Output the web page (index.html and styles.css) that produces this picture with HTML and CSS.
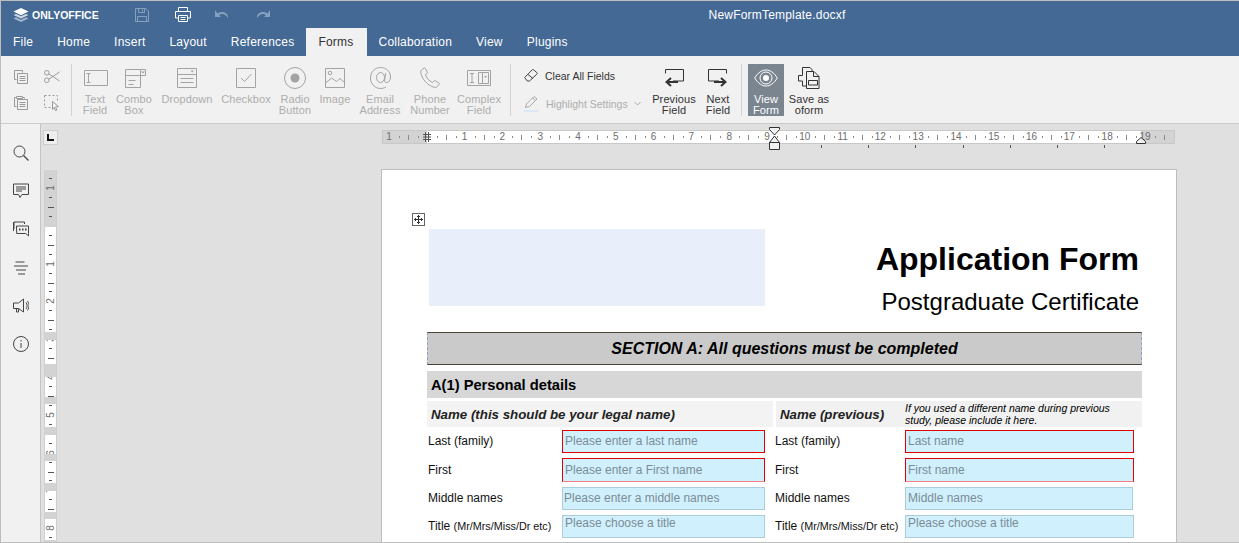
FILE: index.html
```html
<!DOCTYPE html>
<html lang="en">

<head>
    <meta charset="UTF-8">
    <title>NewFormTemplate.docxf</title>
    <link rel="stylesheet" href="styles.css">
</head>

<body>
    <div class="window">
        <!-- title bar -->
        <header class="titlebar">
            <div class="title-left">
                <svg class="logo-mark" width="16" height="16" viewBox="0 0 16 16">
                    <path d="M8 1L15.500 4.600 8 8.200 .5 4.600z" fill="#fff" />
                    <path d="M3 6.900L.5 8 8 11.600 15.500 8 13 6.900 8 9.300z" fill="#fff" opacity=".75" />
                    <path d="M3 10.300L.5 11.400 8 15 15.500 11.400 13 10.300 8 12.700z" fill="#fff" opacity=".5" />
                </svg>
                <span class="logo-text">ONLYOFFICE</span>
                <svg class="q-save" width="14" height="14" viewBox="0 0 14 14" fill="none" stroke="#86a0bf">
                    <path d="M.5.500h10.500l2.500 2.500v10.500h-13z" />
                    <path d="M3.500.5v4h6v-4M7.500 1.500v2M2.500 13.500v-5h9v5" />
                </svg>
                <svg class="q-print" width="16" height="15" viewBox="0 0 16 15" fill="none" stroke="#fff">
                    <path d="M3.500 4V.5h9V4M3.500 11H.5V4.500h15V11h-3" />
                    <path d="M3.500 8.500h9v6h-9zM5.500 10.500h5M5.500 12.500h5" />
                </svg>
                <svg class="q-undo" width="15" height="9" viewBox="0 0 15 9" fill="#86a0bf">
                    <path d="M0 0v7h6L4 5c3-2 6-1.500 9 3 .5-5-5-8-10.500-4.500z" />
                </svg>
                <svg class="q-redo" width="15" height="9" viewBox="0 0 15 9" fill="#86a0bf">
                    <path d="M15 0v7H9l2-2C8 3 5 3.500 2 8 1.500 3 7 0 12.500 3.500z" />
                </svg>
            </div>
            <div class="file-name">NewFormTemplate.docxf</div>
        </header>

        <!-- tabs -->
        <nav class="tabs">
            <a class="tab">File</a>
            <a class="tab">Home</a>
            <a class="tab">Insert</a>
            <a class="tab">Layout</a>
            <a class="tab">References</a>
            <a class="tab active">Forms</a>
            <a class="tab">Collaboration</a>
            <a class="tab">View</a>
            <a class="tab">Plugins</a>
        </nav>

        <!-- toolbar -->
        <section class="toolbar">
            <div class="clipboard">
                <svg width="14" height="14" viewBox="0 0 14 14" fill="none" stroke="#9a9a9a">
                    <path d="M.5.500h8v2M.5.500v9h2" />
                    <path d="M3.500 3.500h10v10h-10zM5.500 6.500h6M5.500 8.500h6M5.500 10.500h6" />
                </svg>
                <svg width="16" height="13" viewBox="0 0 16 13" fill="none" stroke="#9a9a9a">
                    <circle cx="2.800" cy="2.800" r="2.300" />
                    <circle cx="2.800" cy="10.200" r="2.300" />
                    <path d="M4.800 3.800L15.500 11M4.800 9.200L15.500 2" />
                </svg>
                <svg width="14" height="15" viewBox="0 0 14 15" fill="none" stroke="#9a9a9a">
                    <path d="M2.500 2.500h-2v9h2M8.500 2.500h2v1M2.500 1.500h6v2h-6z" />
                    <path d="M3.500 4.500h10v10h-10zM5.500 7.500h6M5.500 9.500h6M5.500 11.500h6" />
                </svg>
                <svg width="15" height="16" viewBox="0 0 15 16" fill="none" stroke="#9a9a9a">
                    <path d="M.5.500h13v7M.5.500v12h7" stroke-dasharray="2 2" />
                    <path d="M8.500 6.500l6 5-3 .5 1.500 3-1.500.5-1.500-3-1.500 2z" />
                </svg>
            </div>
            <div class="sep"></div>

            <div class="form-tools">
                <div class="tool">
                    <svg class="tool-icon" width="26" height="20" viewBox="0 0 26 20" fill="none" stroke="#a3a3a3">
                        <path d="M2.500 2.500h23v15h-23zM4.500 5.500h4M4.500 14.500h4M6.500 5.500v9" />
                    </svg>
                    <span>Text<br>Field</span>
                </div>
                <div class="tool">
                    <svg class="tool-icon" width="26" height="20" viewBox="0 0 26 20" fill="none" stroke="#a3a3a3">
                        <path d="M4.500 1.500v18h15v-18zM4.500 7.500h20M19.500 1.500h5v6M7.500 12.500h7M7.500 16.500h5" />
                        <path d="M20 3.500h4l-2 2z" fill="#a3a3a3" stroke="none" />
                    </svg>
                    <span>Combo<br>Box</span>
                </div>
                <div class="tool">
                    <svg class="tool-icon" width="22" height="20" viewBox="0 0 22 20" fill="none" stroke="#a3a3a3">
                        <path d="M1.500.5h19v19h-19zM1.500 6.500h19M4.500 10.500h13M4.500 14.500h13" />
                        <path d="M14.500 2.500h3.500l-1.750 2z" fill="#a3a3a3" stroke="none" />
                    </svg>
                    <span>Dropdown</span>
                </div>
                <div class="tool">
                    <svg class="tool-icon" width="20" height="20" viewBox="0 0 20 20" fill="none" stroke="#a3a3a3">
                        <path d="M.5.500h19v19h-19zM5 10l3.500 3.500L15.500 6" />
                    </svg>
                    <span>Checkbox</span>
                </div>
                <div class="tool">
                    <svg class="tool-icon" width="22" height="22" viewBox="0 0 22 22" fill="none" stroke="#a3a3a3">
                        <circle cx="11" cy="11" r="10.500" />
                        <circle cx="11" cy="11" r="4.500" fill="#a3a3a3" stroke="none" />
                    </svg>
                    <span>Radio<br>Button</span>
                </div>
                <div class="tool">
                    <svg class="tool-icon" width="20" height="20" viewBox="0 0 20 20" fill="none" stroke="#a3a3a3">
                        <path d="M.5.500h19v19h-19zM.5 15l6-5 5 3.500 3.500-3 4.500 4" />
                        <circle cx="5" cy="5" r="1.800" />
                    </svg>
                    <span>Image</span>
                </div>
                <div class="tool">
                    <svg class="tool-icon" width="21" height="22" viewBox="0 0 21 22" fill="none" stroke="#a3a3a3">
                        <path d="M16 20c-2 1-3.500 1.500-5.500 1.500C5 21.500.5 17 .5 11S5 .5 10.500.5s10 4 10 9.500c0 3.500-2 5.500-4 5.500-1.500 0-2-1-1.800-2.500l1-7" />
                        <ellipse cx="10.500" cy="10.500" rx="4" ry="5" />
                    </svg>
                    <span>Email<br>Address</span>
                </div>
                <div class="tool">
                    <svg class="tool-icon" width="20" height="21" viewBox="0 0 20 21" fill="none" stroke="#a3a3a3">
                        <path d="M1.500 2.500L4 .5c.6-.3 1 0 1.300.5l2 3.500c.3.600.1 1-.3 1.400L5.500 7c.5 3 3.500 6.500 7 8l1.500-1.600c.4-.4.900-.4 1.400-.1l3.500 2.200c.5.300.6.800.2 1.300l-2.100 2.500c-.6.700-1.500.8-2.500.5C7 18 1.500 11 .7 4.500c-.1-.8.200-1.500.8-2z" />
                    </svg>
                    <span>Phone<br>Number</span>
                </div>
                <div class="tool">
                    <svg class="tool-icon" width="24" height="20" viewBox="0 0 24 20" fill="none" stroke="#a3a3a3">
                        <path d="M.5 2.500h23v15H.5zM3 5.500h4M3 14.500h4M5 5.500v9M11.500 4.500h10v11h-10zM15.500 4.500v11" />
                        <path d="M17 8h3l-1.500 2z" fill="#a3a3a3" stroke="none" />
                    </svg>
                    <span>Complex<br>Field</span>
                </div>
            </div>
            <div class="sep sep-b"></div>

            <div class="field-actions">
                <div class="action">
                    <svg width="14" height="13" viewBox="0 0 14 13" fill="none" stroke="#444">
                        <path d="M.7 8.500L8 1c.6-.6 1.200-.6 1.800 0l3 2.500c.6.500.6 1.100 0 1.700L5.500 12H3.300z" />
                        <path d="M4 5.500l5 4" />
                    </svg>
                    <span>Clear All Fields</span>
                </div>
                <div class="action disabled">
                    <svg width="15" height="16" viewBox="0 0 15 16" fill="none" stroke="#a8a8a8">
                        <path d="M1.500 11.500l1-3.500L10 .5l3 2.500-7.500 7.500zM8.500 2l3 2.500" />
                        <path d="M0 15h14" stroke="#dbe8f3" stroke-width="2" />
                    </svg>
                    <span>Highlight Settings</span>
                    <svg class="caret" width="7" height="5" viewBox="0 0 7 5" fill="none" stroke="#a8a8a8">
                        <path d="M.5 1l3 3 3-3" />
                    </svg>
                </div>
            </div>

            <div class="nav-tools">
                <div class="tool dark">
                    <svg class="tool-icon" width="20" height="18" viewBox="0 0 20 18" fill="none" stroke="#333">
                        <path d="M1.500 4.500V.5h18v11.500H9" />
                        <path d="M14 13H4" stroke-width="2" />
                        <path d="M7 9l-4.500 4L7 17" stroke-width="2" />
                    </svg>
                    <span>Previous<br>Field</span>
                </div>
                <div class="tool dark">
                    <svg class="tool-icon" width="20" height="18" viewBox="0 0 20 18" fill="none" stroke="#333">
                        <path d="M18.500 4.500V.5H.5v11.500H11" />
                        <path d="M6 13h10" stroke-width="2" />
                        <path d="M13 9l4.500 4L13 17" stroke-width="2" />
                    </svg>
                    <span>Next<br>Field</span>
                </div>
            </div>
            <div class="sep sep-c"></div>

            <div class="tool view-form">
                <svg class="tool-icon" width="24" height="18" viewBox="0 0 24 18" fill="none" stroke="#fff">
                    <path d="M.7 9C4 3.500 8 1 12 1s8 2.500 11.300 8C20 14.500 16 17 12 17S4 14.500.7 9z" />
                    <circle cx="12" cy="9" r="6" />
                    <circle cx="12" cy="9" r="3" fill="#fff" stroke="none" />
                </svg>
                <span>View<br>Form</span>
            </div>
            <div class="tool dark save-oform">
                <svg class="tool-icon" width="22" height="22" viewBox="0 0 22 22" fill="none" stroke="#333">
                    <path d="M4.500 8.500V.5H12l2 2v2M4.500 8.500h-4v5.500h4v5h4" />
                    <path d="M8.500 4.500v17h12.500V9.500l-5-5zM15.500 4.500v5h5.500M10.500 13.500h9v4.500h-9z" />
                </svg>
                <span>Save as<br>oform</span>
            </div>
        </section>

        <div class="main">
            <!-- left panel -->
            <aside class="sidebar">
                <svg width="16" height="16" viewBox="0 0 16 16" fill="none" stroke="#444">
                    <circle cx="6.500" cy="6.500" r="5.500" />
                    <path d="M10.500 10.500L15.500 15.500" stroke-width="1.300" />
                </svg>
                <svg width="16" height="15" viewBox="0 0 16 15" fill="none" stroke="#444">
                    <path d="M.5.500h15v10.500H9l-2 3-1.500-3h-5zM3 3.500h10M3 5.500h10M3 7.500h6" />
                </svg>
                <svg width="16" height="15" viewBox="0 0 16 15" fill="none" stroke="#444">
                    <path d="M1 7.500V.5h10.500v2M.5.500v9" />
                    <path d="M3.500 4.500h12v7.500l.2 2.500-3-2.500h-9z" />
                    <path d="M6 8h1.500M9 8h1.500M12 8h1.500" stroke-width="2" />
                </svg>
                <svg width="14" height="13" viewBox="0 0 14 13" fill="none" stroke="#444">
                    <path d="M1.500.5h9M0 4.500h14M2 8.500h10M4 12.500h7" />
                </svg>
                <svg width="16" height="15" viewBox="0 0 16 15" fill="none" stroke="#444">
                    <path d="M.5 4.500h5L10.500.5v13l-5-3.500h-5zM3.500 10v3.500h2V10M13 4c1.500 2 1.500 4.500 0 6.500M14.500 2.500c2 3 2 6.500 0 9.500" />
                </svg>
                <svg width="16" height="16" viewBox="0 0 16 16" fill="none" stroke="#444">
                    <circle cx="8" cy="8" r="7.500" />
                    <path d="M8 7v5" />
                    <path d="M8 4v1.500" />
                </svg>
            </aside>

            <div class="canvas">
                <div class="corner"><span class="corner-mark"></span></div>

                <!-- top ruler -->
                <div class="ruler-h">
                    <span>1</span><span></span>
                    <span>1</span><span>2</span><span>3</span><span>4</span><span>5</span><span>6</span>
                    <span>7</span><span>8</span><span>9</span><span>10</span><span>11</span><span>12</span>
                    <span>13</span><span>14</span><span>15</span><span>16</span><span>17</span><span>18</span><span>19</span>
                    <svg class="margin-left" width="8" height="10" viewBox="0 0 8 10" stroke="#555">
                        <path d="M0 2.500h8M0 5h8M0 7.500h8M2.500 0v10M5.500 0v10" />
                    </svg>
                    <svg class="indent-mark" width="11" height="23" viewBox="0 0 11 23" fill="#f1f1f1" stroke="#333">
                        <path d="M.5.500h10v2L5.500 8 .5 2.500zM.5 15.500L5.500 9l5 6.500zM.5 15.500h10v7H.5z" />
                    </svg>
                    <svg class="indent-right" width="10" height="7" viewBox="0 0 10 7" fill="#f1f1f1" stroke="#333">
                        <path d="M.5 6.500v-2L5 .5l4.500 4v2z" />
                    </svg>
                    <div class="tab-stops"></div>
                </div>

                <!-- left ruler -->
                <div class="ruler-v">
                    <span>1</span><span></span>
                    <span>1</span><span>2</span><span>3</span><span>4</span><span>5</span><span>6</span><span>7</span><span>8</span>
                    <div class="row-bands"></div>
                </div>

                <!-- the document -->
                <article class="page">
                    <div class="move-handle">
                        <svg width="9" height="9" viewBox="0 0 9 9" fill="none" stroke="#333">
                            <path d="M4.500 0v9M0 4.500h9M3 1.500h3M3 7.500h3M1.500 3v3M7.500 3v3" />
                        </svg>
                    </div>

                    <div class="doc-head">
                        <div class="logo-slot"></div>
                        <div class="doc-title">
                            <h1>Application Form</h1>
                            <p>Postgraduate Certificate</p>
                        </div>
                    </div>

                    <h2 class="section-a">SECTION A: All questions must be completed</h2>
                    <h3 class="part-title">A(1) Personal details</h3>

                    <div class="name-row">
                        <div class="name-cell name-legal"><b>Name (this should be your legal name)</b></div>
                        <div class="name-cell name-prev">
                            <b>Name (previous)</b>
                            <small>If you used a different name during previous study, please include it here.</small>
                        </div>
                    </div>

                    <div class="fields">
                        <label>Last (family)</label>
                        <div class="field required">Please enter a last name</div>
                        <label class="right-label">Last (family)</label>
                        <div class="field required">Last name</div>

                        <label class="tall">First</label>
                        <div class="field required fade-bottom">Please enter a First name</div>
                        <label class="right-label tall">First</label>
                        <div class="field required fade-bottom">First name</div>

                        <label>Middle names</label>
                        <div class="field tight">Please enter a middle names</div>
                        <label class="right-label">Middle names</label>
                        <div class="field short">Middle names</div>

                        <label>Title <small>(Mr/Mrs/Miss/Dr etc)</small></label>
                        <div class="field choice">Please choose a title</div>
                        <label class="right-label">Title <small>(Mr/Mrs/Miss/Dr etc)</small></label>
                        <div class="field choice">Please choose a title</div>
                    </div>
                </article>
            </div>
        </div>
    </div>
</body>

</html>
```

FILE: styles.css
```css
body {
    margin: 0;
    font-family: "Liberation Sans", Arial, sans-serif;
    font-size: 12px;
    color: #111;
    background: #e0e0e0;
}

.window {
    box-sizing: border-box;
    width: 1239px;
    height: 543px;
    border: 1px solid #bdbdbd;
    border-right: none;
    display: flex;
    flex-direction: column;
    overflow: hidden;
}

/* title bar */
.titlebar {
    flex: none;
    height: 27px;
    background: #446995;
    color: #fff;
    display: flex;
    align-items: center;
}

.title-left {
    flex: none;
    width: 314px;
    display: flex;
    align-items: center;
    padding-left: 12px;
    box-sizing: border-box;
}

.logo-text {
    margin-left: 3px;
    font-size: 10.5px;
    font-weight: bold;
}

.q-save {
    margin-left: 36px;
}

.q-print {
    margin-left: 26px;
}

.q-undo {
    margin-left: 24px;
}

.q-redo {
    margin-left: 25px;
}

.file-name {
    flex: 1;
    text-align: center;
    letter-spacing: .2px;
}

/* tabs */
.tabs {
    flex: none;
    height: 28px;
    background: #446995;
    display: flex;
    align-items: stretch;
}

.tab {
    padding: 6px 12px 0;
    color: #fff;
    letter-spacing: .22px;
    line-height: 16px;
}

.tab.active {
    background: #f1f1f1;
    color: #333;
    padding-right: 13px;
}

/* toolbar */
.toolbar {
    flex: none;
    box-sizing: border-box;
    height: 68px;
    background: #f1f1f1;
    border-bottom: 1px solid #cbcbcb;
    display: flex;
    align-items: flex-start;
    padding-top: 8px;
    padding-left: 13px;
}

.clipboard {
    width: 57px;
    height: 52px;
    display: grid;
    grid-template-columns: 30px 27px;
    align-items: center;
    justify-items: start;
}

.sep {
    flex: none;
    width: 1px;
    height: 52px;
    background: #d2d2d2;
}

.form-tools {
    margin-left: 4px;
    display: grid;
    grid-template-columns: 38px 40px 66px 52px 46px 34px 56px 44px 54px;
}

.tool {
    display: flex;
    flex-direction: column;
    align-items: center;
    height: 52px;
    font-size: 11px;
    line-height: 11px;
    color: #adadad;
    letter-spacing: .1px;
    text-align: center;
}

.tool-icon {
    flex: none;
    height: 22px;
    margin-top: 3px;
    margin-bottom: 5px;
}

.sep-b {
    margin-left: 4px;
}

.field-actions {
    box-sizing: border-box;
    width: 142px;
    height: 52px;
    padding: 4px 0 5px 13px;
    display: flex;
    flex-direction: column;
    justify-content: space-between;
}

.action {
    display: flex;
    align-items: center;
    font-size: 10.5px;
    color: #333;
    height: 15px;
}

.action svg:first-child {
    flex: none;
    margin-right: 7px;
}

.action.disabled {
    color: #adadad;
}

.action .caret {
    margin-left: 6px;
}

.nav-tools {
    display: grid;
    grid-template-columns: 44px 44px;
    margin-left: -1px;
}

.tool.dark {
    color: #333;
}

.sep-c {
    margin-left: 1px;
}

.tool.view-form {
    width: 36px;
    margin-left: 6px;
    background: #7b858f;
    color: #fff;
}

.tool.save-oform {
    width: 50px;
}

/* left panel */
.main {
    flex: 1;
    min-height: 0;
    display: flex;
}

.sidebar {
    flex: none;
    box-sizing: border-box;
    width: 40px;
    background: #f1f1f1;
    border-right: 1px solid #c4c4c4;
    display: flex;
    flex-direction: column;
    align-items: center;
    gap: 22.200px;
    padding-top: 21px;
}

.sidebar svg {
    flex: none;
    height: 16px;
}

.canvas {
    flex: 1;
    min-width: 0;
    background: #e0e0e0;
    display: grid;
    grid-template-columns: 15px 1fr;
    grid-template-rows: 15px 1fr;
    padding: 6px 0 0 2px;
    overflow: hidden;
}

.corner {
    box-sizing: border-box;
    width: 15px;
    height: 15px;
    background: #eee;
    border: 1px solid #cdcdcd;
    display: flex;
    align-items: center;
    justify-content: center;
}

.corner-mark {
    box-sizing: border-box;
    width: 7px;
    height: 7px;
    border-left: 2px solid #111;
    border-bottom: 2px solid #111;
}

/* rulers */
.ruler-h {
    box-sizing: border-box;
    position: relative;
    width: 793px;
    height: 14px;
    margin-left: 324px;
    border: 1px solid #c8c8c8;
    display: flex;
    font-size: 10px;
    line-height: 12px;
    color: #6d6d6d;
    background:
        repeating-linear-gradient(90deg, #8a8a8a 0 1px, transparent 1px 37.8px) 25px center / 100% 5px no-repeat,
        repeating-linear-gradient(90deg, #8a8a8a 0 1px, transparent 1px 18.9px) 15.600px center / 100% 2px no-repeat,
        linear-gradient(90deg, #d3d3d3 44px, #fff 44px 758px, #d3d3d3 758px);
}

.ruler-h span {
    flex: none;
    width: 37.8px;
    text-align: center;
}

.ruler-h span:first-child {
    margin-left: -12.900px;
}

.margin-left {
    position: absolute;
    left: 40px;
    top: 1px;
}

.indent-mark {
    position: absolute;
    left: 386px;
    top: -4px;
}

.indent-right {
    position: absolute;
    left: 753px;
    top: 6px;
}

.tab-stops {
    position: absolute;
    left: 438px;
    top: 14px;
    width: 290px;
    height: 3px;
    background: repeating-linear-gradient(90deg, #555 0 1px, transparent 1px 47.2px);
}

.ruler-v {
    box-sizing: border-box;
    position: relative;
    grid-column: 1;
    grid-row: 2;
    width: 13px;
    height: 400px;
    margin: 25px 0 0 1px;
    border: 1px solid #cfcfcf;
    border-top: none;
    display: flex;
    flex-direction: column;
    font-size: 10px;
    line-height: 12px;
    color: #6d6d6d;
    background:
        repeating-linear-gradient(180deg, #555 0 1px, transparent 1px 37.8px) center 37px / 6px 100% no-repeat,
        repeating-linear-gradient(180deg, #555 0 1px, transparent 1px 18.9px) center 8px / 3px 100% no-repeat,
        linear-gradient(#d3d3d3 57px, #fff 57px);
}

.ruler-v span {
    flex: none;
    height: 37.8px;
    display: flex;
    align-items: center;
    justify-content: center;
    writing-mode: vertical-rl;
    transform: rotate(180deg);
}

.ruler-v span:first-child {
    margin-top: -1px;
}

.row-bands {
    position: absolute;
    inset: 0;
    background: linear-gradient(transparent 162px, #d3d3d3 162px 170px, transparent 170px 194px, #d3d3d3 194px 207px,
        transparent 207px 227px, #d3d3d3 227px 234px, transparent 234px 257px, #d3d3d3 257px 265px,
        transparent 265px 284px, #d3d3d3 284px 291px, transparent 291px 313px, #d3d3d3 313px 321px,
        transparent 321px 342px, #d3d3d3 342px 349px, transparent 349px 370px, #d3d3d3 370px);
}

/* the document */
.page {
    box-sizing: border-box;
    position: relative;
    grid-column: 2;
    grid-row: 2;
    width: 796px;
    height: 420px;
    margin: 24px 0 0 323px;
    padding: 59px 0 0 45px;
    background: #fff;
    border: 1px solid #bdbdbd;
}

.move-handle {
    box-sizing: border-box;
    position: absolute;
    left: 30px;
    top: 43px;
    width: 13px;
    height: 13px;
    border: 1px solid #666;
    display: flex;
    align-items: center;
    justify-content: center;
}

.doc-head {
    width: 710px;
    height: 77px;
    margin-left: 2px;
    display: flex;
    justify-content: space-between;
}

.logo-slot {
    width: 336px;
    height: 77px;
    background: #e8effb;
}

.doc-title {
    text-align: right;
    color: #000;
}

.doc-title h1 {
    margin: 12px 0 0;
    font-size: 32px;
    line-height: 36px;
    font-weight: bold;
}

.doc-title p {
    margin: 13px 0 0;
    font-size: 24px;
    line-height: 24px;
}

.section-a {
    box-sizing: border-box;
    width: 715px;
    height: 33px;
    margin: 26px 0 0;
    background: #cacaca;
    border-top: 1px solid #4a4432;
    border-bottom: 1px solid #4a4432;
    border-left: 1px dashed #8aa3c7;
    border-right: 1px dashed #8aa3c7;
    text-align: center;
    font-size: 16px;
    line-height: 31px;
    font-style: italic;
    font-weight: bold;
    color: #000;
}

.part-title {
    box-sizing: border-box;
    width: 715px;
    height: 27px;
    margin: 6px 0 0;
    padding-left: 4px;
    background: #d7d7d7;
    font-size: 14.700px;
    line-height: 28px;
    color: #000;
}

.name-row {
    display: flex;
    gap: 3px;
    width: 715px;
    height: 26px;
    margin-top: 3px;
}

.name-cell {
    box-sizing: border-box;
    padding-left: 4px;
    display: flex;
    align-items: center;
    font-size: 13.300px;
    font-style: italic;
    color: #222;
}

.name-legal {
    width: 346px;
    background: #f3f3f3;
}

.name-prev {
    width: 366px;
    background: #f1f1f1;
}

.name-prev b {
    flex: none;
    width: 125px;
}

.name-prev small {
    font-size: 10.500px;
    line-height: 12px;
    color: #000;
    width: 230px;
}

.fields {
    display: grid;
    grid-template-columns: 135px 203px 10px 130px 229px;
    grid-template-rows: 23px 24px 23px 23px;
    row-gap: 5px;
    width: 707px;
    margin-top: 3px;
}

.fields label {
    padding-left: 1px;
    line-height: 23px;
    color: #111;
}

.fields label.tall {
    line-height: 25px;
}

.fields label small {
    font-size: 10.800px;
}

.right-label {
    grid-column: 4;
    white-space: nowrap;
}

.fields .right-label {
    padding-left: 0;
}

.field {
    box-sizing: border-box;
    background: #d0f0fe;
    border: 1px solid #aecbd8;
    color: #7c8c95;
    padding-left: 2px;
    line-height: 21px;
}

.field.required {
    border-color: #e00000;
}

.field.fade-bottom {
    border-bottom-color: #f08080;
    line-height: 23px;
}

.field.tight {
    padding-left: 1px;
}

.field.short {
    width: 228px;
}

.field.choice {
    line-height: 15px;
}
```
